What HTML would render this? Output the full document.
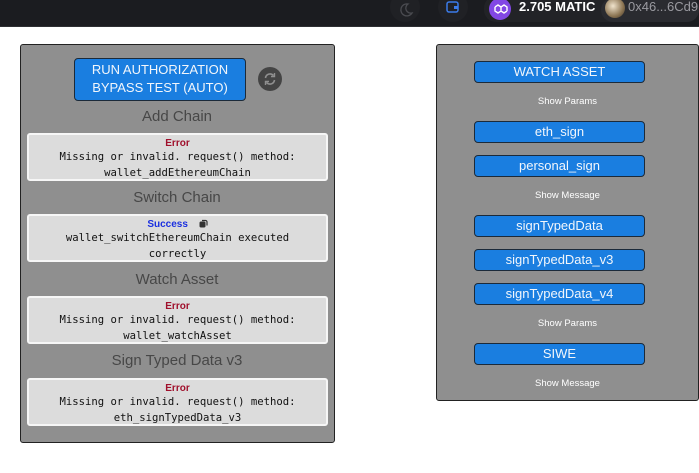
<!DOCTYPE html>
<html><head><meta charset="utf-8"><style>
*{margin:0;padding:0;box-sizing:border-box}
body{width:699px;height:473px;background:#fff;position:relative;overflow:hidden;font-family:"Liberation Sans",sans-serif}
.a{position:absolute}
.top{left:0;top:0;width:699px;height:27px;background:#1b1c20;border-bottom:1px solid #2e2f33}
.panel{background:#8f8f8f;border:1px solid #222;border-radius:3px}
.btn{position:absolute;background:#1a7ee0;border:1px solid #1b2a3a;border-radius:4px;color:#f2f6fb;text-align:center;font-size:13px}
.h{position:absolute;width:314px;text-align:center;color:#474747;font-size:15px;left:20px}
.box{position:absolute;left:27px;width:301px;height:48px;background:#dcdcdc;border:2px solid #f6f6f6;border-radius:3px;text-align:center;font-family:"DejaVu Sans Mono","Liberation Mono",monospace;font-size:10.6px;color:#111;line-height:15.5px;padding-top:2px}
.box b{font-family:"Liberation Sans",sans-serif;font-size:10px;display:block;line-height:13px}
.err{color:#a0102c}.ok{color:#1a2fe0}
.sm{position:absolute;left:436px;width:263px;text-align:center;color:#fff;font-size:9.5px}
</style></head><body>
<div class="a top"></div>
<div class="a" style="left:390px;top:-8px;width:30px;height:30px;border-radius:50%;background:#202125"></div>
<svg class="a" style="left:398px;top:2px" width="16" height="16" viewBox="0 0 16 16"><path d="M10 2a6 6 0 1 0 4 9A5 5 0 0 1 10 2z" fill="none" stroke="#4a4b50" stroke-width="1.3"/></svg>
<div class="a" style="left:438px;top:-8px;width:30px;height:30px;border-radius:50%;background:#202125"></div>
<svg class="a" style="left:445px;top:0px" width="16" height="14" viewBox="0 0 16 14"><rect x="2" y="2" width="11" height="10" rx="2" fill="none" stroke="#3b7be8" stroke-width="1.5"/><rect x="9" y="6" width="4" height="3" fill="#3b7be8"/></svg>
<div class="a" style="left:484px;top:-4px;width:215px;height:26px;border-radius:12px;background:#222327"></div>
<div class="a" style="left:489px;top:-2px;width:22px;height:22px;border-radius:50%;background:#8247e5"></div>
<svg class="a" style="left:492px;top:1px" width="16" height="16" viewBox="0 0 16 16"><path d="M3 6l3-2 3 2v4l3 2 3-2M3 6v4l3 2 3-2V6l3-2 3 2v4" fill="none" stroke="#fff" stroke-width="1.4"/></svg>
<div class="a" style="left:519px;top:-1px;color:#fff;font-weight:bold;font-size:13px">2.705 MATIC</div>
<div class="a" style="left:601px;top:-2px;width:98px;height:24px;border-radius:12px;background:#2a2b30"></div>
<div class="a" style="left:605px;top:-2px;width:20px;height:20px;border-radius:50%;background:radial-gradient(circle at 40% 40%,#f0e3cc,#8b7452 60%,#3a3026)"></div>
<div class="a" style="left:628px;top:-1px;color:#9a9aa0;font-size:13px">0x46...6Cd9</div>

<div class="a panel" style="left:20px;top:44px;width:315px;height:399px"></div>
<div class="btn" style="left:74px;top:58px;width:172px;height:43px;line-height:18px;padding-top:2px;font-size:13px">RUN AUTHORIZATION<br>BYPASS TEST (AUTO)</div>
<svg class="a" style="left:258px;top:67px" width="24" height="24" viewBox="0 0 24 24"><circle cx="12" cy="12" r="12" fill="#444"/><path d="M7.5 11a4.6 4.6 0 0 1 8-2.5M16.5 13a4.6 4.6 0 0 1-8 2.5" fill="none" stroke="#8f8f8f" stroke-width="1.6"/><path d="M16.5 6v3.5H13M7.5 18v-3.5H11" fill="none" stroke="#8f8f8f" stroke-width="1.4"/></svg>
<div class="h" style="top:108px">Add Chain</div>
<div class="box" style="top:133px"><b class="err">Error</b>Missing or invalid. request() method:<br>wallet_addEthereumChain</div>
<div class="h" style="top:189px">Switch Chain</div>
<div class="box" style="top:214px"><b class="ok">Success <svg width="9" height="9" viewBox="0 0 9 9" style="margin-left:8px;vertical-align:-1px"><rect x="0.5" y="2.5" width="6" height="6" rx="1.5" fill="#333"/><path d="M3 1.5h3.5a1.5 1.5 0 0 1 1.5 1.5v3.5" fill="none" stroke="#333" stroke-width="1.2"/></svg></b>wallet_switchEthereumChain executed<br>correctly</div>
<div class="h" style="top:271px">Watch Asset</div>
<div class="box" style="top:296px"><b class="err">Error</b>Missing or invalid. request() method:<br>wallet_watchAsset</div>
<div class="h" style="top:352px">Sign Typed Data v3</div>
<div class="box" style="top:378px"><b class="err">Error</b>Missing or invalid. request() method:<br>eth_signTypedData_v3</div>

<div class="a panel" style="left:436px;top:44px;width:263px;height:357px"></div>
<div class="btn" style="left:474px;top:61px;width:171px;height:22px;line-height:19px">WATCH ASSET</div>
<div class="sm" style="top:96px">Show Params</div>
<div class="btn" style="left:474px;top:121px;width:171px;height:22px;line-height:19px">eth_sign</div>
<div class="btn" style="left:474px;top:155px;width:171px;height:22px;line-height:19px">personal_sign</div>
<div class="sm" style="top:190px">Show Message</div>
<div class="btn" style="left:474px;top:215px;width:171px;height:22px;line-height:19px">signTypedData</div>
<div class="btn" style="left:474px;top:249px;width:171px;height:22px;line-height:19px">signTypedData_v3</div>
<div class="btn" style="left:474px;top:283px;width:171px;height:22px;line-height:19px">signTypedData_v4</div>
<div class="sm" style="top:318px">Show Params</div>
<div class="btn" style="left:474px;top:343px;width:171px;height:22px;line-height:19px">SIWE</div>
<div class="sm" style="top:378px">Show Message</div>
</body></html>
